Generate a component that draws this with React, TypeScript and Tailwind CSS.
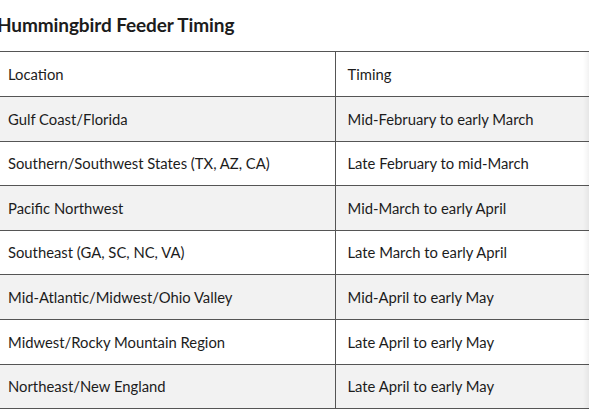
import React from 'react';

const rows: [string, string][] = [
  ['Gulf Coast/Florida', 'Mid-February to early March'],
  ['Southern/Southwest States (TX, AZ, CA)', 'Late February to mid-March'],
  ['Pacific Northwest', 'Mid-March to early April'],
  ['Southeast (GA, SC, NC, VA)', 'Late March to early April'],
  ['Mid-Atlantic/Midwest/Ohio Valley', 'Mid-April to early May'],
  ['Midwest/Rocky Mountain Region', 'Late April to early May'],
  ['Northeast/New England', 'Late April to early May'],
];

export default function App() {
  return (
    <div className="w-[589px] h-[412px] overflow-hidden bg-white text-[#1c1c1c] font-['Lato',sans-serif]">
      <div className="h-[51px] flex items-center -ml-[3px]">
        <h2 className="text-[19px] font-bold tracking-[-0.1px]">Hummingbird Feeder Timing</h2>
      </div>
      <div className="relative">
        <table className="w-[640px] border-collapse text-[14.8px] table-fixed">
          <thead>
            <tr className="h-[45px] border-y border-[#555]">
              <th className="w-[335px] px-2 text-left font-normal border-r border-[#555]">Location</th>
              <th className="px-3 text-left font-normal">Timing</th>
            </tr>
          </thead>
          <tbody>
            {rows.map(([loc, time], i) => (
              <tr key={loc} className={`h-[44.6px] border-b border-[#555] ${i % 2 === 0 ? 'bg-[#f2f2f2]' : 'bg-white'}`}>
                <td className="px-2 border-r border-[#555]">{loc}</td>
                <td className="px-3">{time}</td>
              </tr>
            ))}
          </tbody>
        </table>
        <div className="absolute top-0 right-0 bottom-0 w-[6px] bg-gradient-to-l from-black/5 to-transparent" />
      </div>
    </div>
  );
}
